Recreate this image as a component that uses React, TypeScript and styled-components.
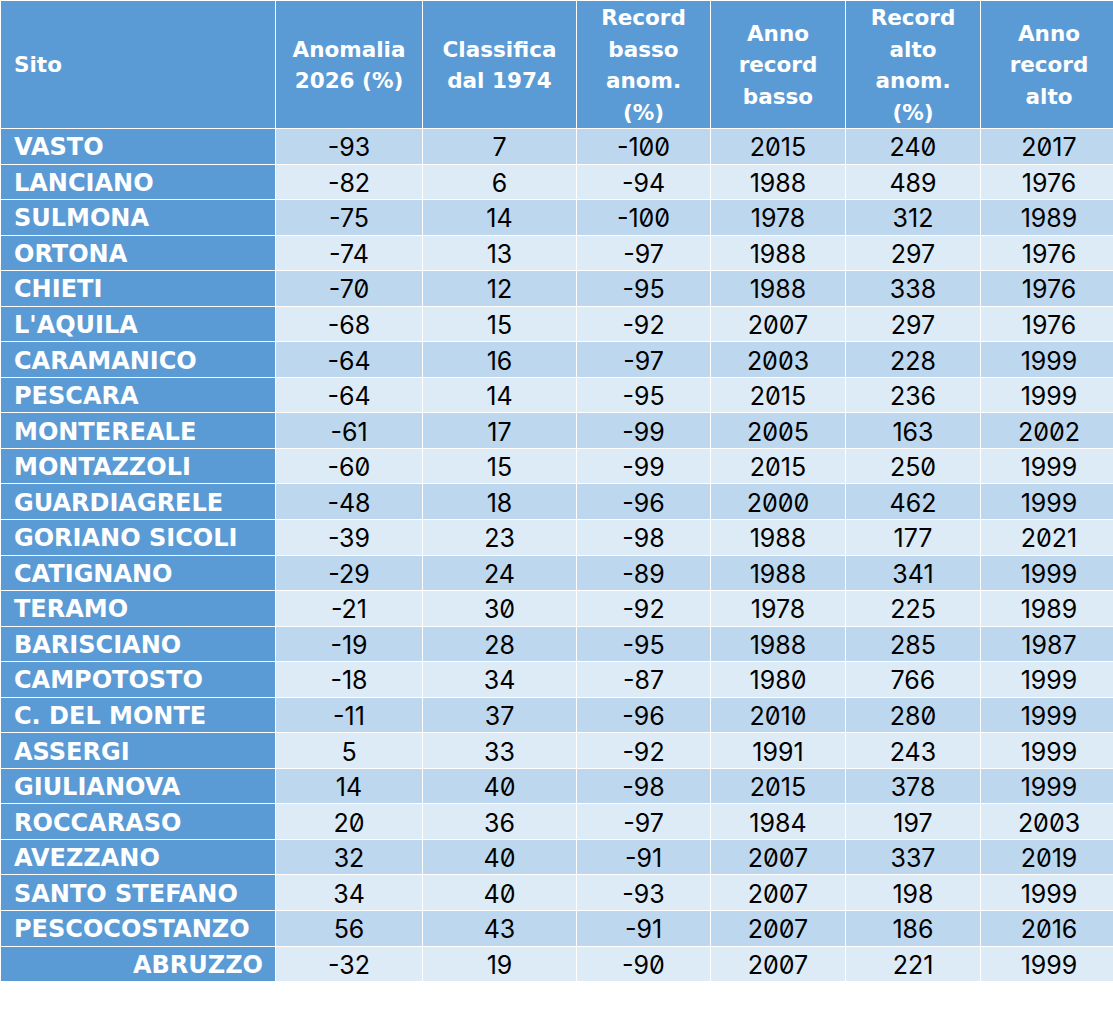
import React from "react";
import styled, { createGlobalStyle } from "styled-components";

const Global = createGlobalStyle`
  html, body {
    margin: 0;
    padding: 0;
    background: #ffffff;
    overflow: hidden;
  }
  body {
    font-family: "DejaVu Sans", Verdana, sans-serif;
  }
`;

const Table = styled.table`
  border-collapse: separate;
  border-spacing: 1px;
  width: 1116px;
  table-layout: fixed;
  background: #ffffff;
`;

const HeadCell = styled.th<{ $left?: boolean }>`
  box-sizing: border-box;
  height: 126px;
  padding: 1px 0 0 ${(p) => (p.$left ? "13px" : "0")};
  background: #5b9bd5;
  color: #ffffff;
  font-family: "DejaVu Sans", Verdana, sans-serif;
  font-weight: 700;
  font-size: 21.5px;
  line-height: 31.5px;
  text-align: ${(p) => (p.$left ? "left" : "center")};
  vertical-align: middle;
  white-space: nowrap;
`;

const SiteCell = styled.th<{ $total?: boolean }>`
  box-sizing: border-box;
  height: 34.55px;
  padding: 3px ${(p) => (p.$total ? "12px" : "0")} 0 ${(p) => (p.$total ? "0" : "13px")};
  background: #5b9bd5;
  color: #ffffff;
  font-family: "DejaVu Sans", Verdana, sans-serif;
  font-weight: 700;
  font-size: 24px;
  line-height: 31px;
  text-align: ${(p) => (p.$total ? "right" : "left")};
  vertical-align: middle;
  white-space: nowrap;
`;

const DataCell = styled.td<{ $dark: boolean }>`
  box-sizing: border-box;
  height: 34.55px;
  padding: 3px 0 0;
  background: ${(p) => (p.$dark ? "#bdd7ee" : "#ddebf7")};
  color: #000000;
  font-family: Inter, "Liberation Sans", sans-serif;
  font-feature-settings: "zero" 1;
  font-weight: 400;
  font-size: 25px;
  line-height: 31px;
  text-align: center;
  vertical-align: middle;
`;

const widths = [274, 146, 153, 133, 134, 134, 136];

const headers: string[][] = [
  ["Sito"],
  ["Anomalia", "2026 (%)"],
  ["Classifica", "dal 1974"],
  ["Record", "basso", "anom.", "(%)"],
  ["Anno", "record", "basso"],
  ["Record", "alto", "anom.", "(%)"],
  ["Anno", "record", "alto"],
];

type Row = [string, number, number, number, number, number, number];

const rows: Row[] = [
  ["VASTO", -93, 7, -100, 2015, 240, 2017],
  ["LANCIANO", -82, 6, -94, 1988, 489, 1976],
  ["SULMONA", -75, 14, -100, 1978, 312, 1989],
  ["ORTONA", -74, 13, -97, 1988, 297, 1976],
  ["CHIETI", -70, 12, -95, 1988, 338, 1976],
  ["L'AQUILA", -68, 15, -92, 2007, 297, 1976],
  ["CARAMANICO", -64, 16, -97, 2003, 228, 1999],
  ["PESCARA", -64, 14, -95, 2015, 236, 1999],
  ["MONTEREALE", -61, 17, -99, 2005, 163, 2002],
  ["MONTAZZOLI", -60, 15, -99, 2015, 250, 1999],
  ["GUARDIAGRELE", -48, 18, -96, 2000, 462, 1999],
  ["GORIANO SICOLI", -39, 23, -98, 1988, 177, 2021],
  ["CATIGNANO", -29, 24, -89, 1988, 341, 1999],
  ["TERAMO", -21, 30, -92, 1978, 225, 1989],
  ["BARISCIANO", -19, 28, -95, 1988, 285, 1987],
  ["CAMPOTOSTO", -18, 34, -87, 1980, 766, 1999],
  ["C. DEL MONTE", -11, 37, -96, 2010, 280, 1999],
  ["ASSERGI", 5, 33, -92, 1991, 243, 1999],
  ["GIULIANOVA", 14, 40, -98, 2015, 378, 1999],
  ["ROCCARASO", 20, 36, -97, 1984, 197, 2003],
  ["AVEZZANO", 32, 40, -91, 2007, 337, 2019],
  ["SANTO STEFANO", 34, 40, -93, 2007, 198, 1999],
  ["PESCOCOSTANZO", 56, 43, -91, 2007, 186, 2016],
  ["ABRUZZO", -32, 19, -90, 2007, 221, 1999],
];

export default function App() {
  return (
    <>
      <Global />
      <Table>
        <colgroup>
          {widths.map((w, i) => (
            <col key={i} style={{ width: w }} />
          ))}
        </colgroup>
        <thead>
          <tr>
            {headers.map((lines, i) => (
              <HeadCell key={i} $left={i === 0}>
                {lines.map((l, j) => (
                  <React.Fragment key={j}>
                    {j > 0 && <br />}
                    {l}
                  </React.Fragment>
                ))}
              </HeadCell>
            ))}
          </tr>
        </thead>
        <tbody>
          {rows.map((r, i) => {
            const [name, ...vals] = r;
            const total = i === rows.length - 1;
            return (
              <tr key={name}>
                <SiteCell $total={total}>{name}</SiteCell>
                {vals.map((v, j) => (
                  <DataCell key={j} $dark={i % 2 === 0}>
                    {v}
                  </DataCell>
                ))}
              </tr>
            );
          })}
        </tbody>
      </Table>
    </>
  );
}
